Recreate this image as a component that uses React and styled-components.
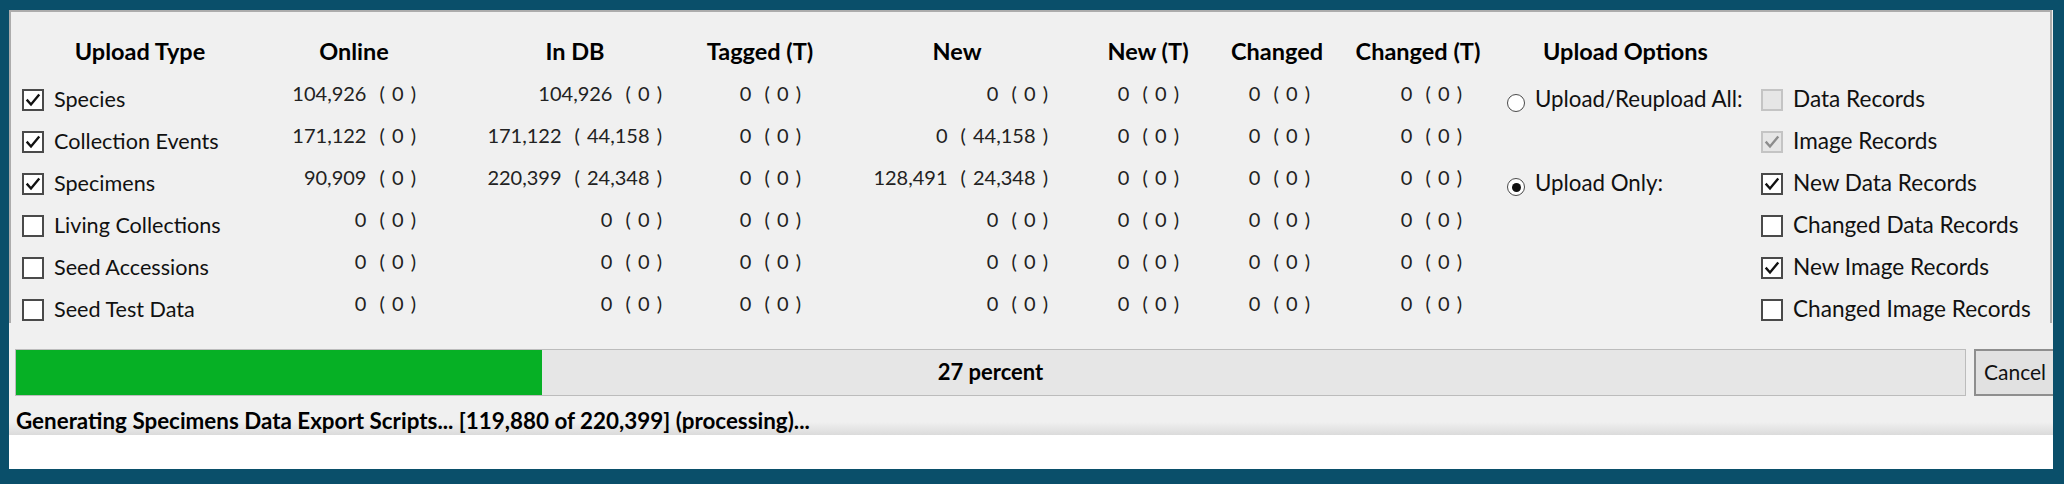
import React from "react";
import styled, { createGlobalStyle } from "styled-components";

const GlobalStyle = createGlobalStyle`
  html, body { margin: 0; padding: 0; }
  body { background: #0a4f6a; font-family: "Lato", "Open Sans", sans-serif; }
`;

const Frame = styled.div`
  width: 2064px;
  height: 484px;
  box-sizing: border-box;
  padding: 10px 11px 15px 9px;
  background: #0a4f6a;
`;

const Window = styled.div`
  height: 459px;
  background: #f0f0f0;
  display: flex;
  flex-direction: column;
  overflow: hidden;
`;

const GroupPanel = styled.div`
  flex: none;
  height: 313px;
  box-sizing: border-box;
  margin-right: 1px;
  border: 2px solid #acacac;
  border-bottom: none;
  overflow: hidden;
`;

const Table = styled.div`
  display: grid;
  grid-template-columns: 258px 170px 272px 98px 296px 86px 172px 110px 278px 299px;
  grid-template-rows: 67px repeat(6, 42px);
`;

const HeaderCell = styled.div`
  display: flex;
  justify-content: ${(p) => (p.$left ? "flex-start" : "center")};
  padding-top: 25px;
  padding-left: ${(p) => p.$pl || 0}px;
  font-size: 23.5px;
  line-height: 28px;
  font-weight: 700;
  color: #000;
  white-space: nowrap;
`;

const NameCell = styled.div`
  display: flex;
  align-items: center;
  gap: 10px;
  padding-left: ${(p) => p.$pl || 0}px;
  white-space: nowrap;
`;

const Label = styled.span`
  font-size: ${(p) => p.$size || 22}px;
  line-height: 26px;
  padding-bottom: 3px;
  color: #111;
`;

const NumCell = styled.div`
  display: flex;
  justify-content: flex-end;
  align-items: flex-start;
  padding-top: 2px;
  padding-right: ${(p) => p.$pr}px;
  font-size: 20px;
  line-height: 24px;
  color: #222;
  white-space: pre;
`;

const Paren = styled.span`
  margin-left: 13px;
  word-spacing: 2px;
`;

const Box = styled.span`
  flex: none;
  width: 22px;
  height: 22px;
  box-sizing: border-box;
  border: 2px solid ${(p) => (p.$disabled ? "#c4c4c4" : "#4a4a4a")};
  background: ${(p) => (p.$disabled ? "#e6e6e6" : "#fff")};
  display: flex;
  align-items: center;
  justify-content: center;
`;

const RadioCircle = styled.span`
  flex: none;
  width: 18px;
  height: 18px;
  margin-top: 6px;
  box-sizing: border-box;
  border-radius: 50%;
  border: 1.5px solid #4a4a4a;
  background: #fff;
  display: flex;
  align-items: center;
  justify-content: center;
`;

const RadioDot = styled.span`
  width: 9px;
  height: 9px;
  border-radius: 50%;
  background: #111;
`;

const Empty = styled.div``;

const ProgressRow = styled.div`
  flex: none;
  display: flex;
  gap: 8px;
  margin-top: 26px;
  height: 47px;
  padding-left: 6px;
`;

const ProgressBar = styled.div`
  flex: none;
  width: 1951px;
  box-sizing: border-box;
  border: 1px solid #bcbcbc;
  background: #e6e6e6;
  display: grid;
`;

const ProgressFill = styled.div`
  grid-area: 1 / 1;
  justify-self: start;
  height: 100%;
  background: #06b025;
`;

const ProgressText = styled.div`
  grid-area: 1 / 1;
  align-self: center;
  justify-self: center;
  font-size: 22px;
  font-weight: 700;
  color: #000;
  padding-bottom: 2px;
`;

const CancelButton = styled.button`
  flex: none;
  width: 92px;
  height: 47px;
  box-sizing: border-box;
  border: 2px solid #8e8e8e;
  background: #e1e1e1;
  font-family: "Lato", "Open Sans", sans-serif;
  font-size: 21px;
  color: #111;
  text-align: left;
  padding: 0 0 2px 8px;
`;

const StatusBar = styled.div`
  flex: none;
  height: 39px;
  box-sizing: border-box;
  padding: 12px 0 0 7px;
  font-size: 22.4px;
  line-height: 26px;
  font-weight: 700;
  color: #000;
  white-space: nowrap;
  background: linear-gradient(to bottom, #f0f0f0 26px, #dbdbdb 39px);
`;

const WhiteArea = styled.div`
  flex: 1;
  background: #fff;
`;

const Check = ({ color }) => (
  <svg width="16" height="16" viewBox="0 0 16 16">
    <polyline
      points="2.5,8.5 6,12.5 13.5,3.5"
      fill="none"
      stroke={color}
      strokeWidth="2.4"
      strokeLinecap="square"
      strokeLinejoin="miter"
    />
  </svg>
);

const CheckBox = ({ checked, disabled }) => (
  <Box $disabled={disabled}>
    {checked && <Check color={disabled ? "#8c8c8c" : "#111"} />}
  </Box>
);

const Radio = ({ checked }) => (
  <RadioCircle>{checked && <RadioDot />}</RadioCircle>
);

const headers = [
  "Online",
  "In DB",
  "Tagged (T)",
  "New",
  "New (T)",
  "Changed",
  "Changed (T)",
];
const rightPad = [23, 49, 8, 57, 12, 53, 11];

const z = ["0", "0"];
const rows = [
  {
    label: "Species",
    checked: true,
    cells: [["104,926", "0"], ["104,926", "0"], z, z, z, z, z],
    radio: { label: "Upload/Reupload All:", checked: false },
    option: { label: "Data Records", checked: false, disabled: true },
  },
  {
    label: "Collection Events",
    checked: true,
    cells: [["171,122", "0"], ["171,122", "44,158"], z, ["0", "44,158"], z, z, z],
    option: { label: "Image Records", checked: true, disabled: true },
  },
  {
    label: "Specimens",
    checked: true,
    cells: [["90,909", "0"], ["220,399", "24,348"], z, ["128,491", "24,348"], z, z, z],
    radio: { label: "Upload Only:", checked: true },
    option: { label: "New Data Records", checked: true },
  },
  {
    label: "Living Collections",
    checked: false,
    cells: [z, z, z, z, z, z, z],
    option: { label: "Changed Data Records", checked: false },
  },
  {
    label: "Seed Accessions",
    checked: false,
    cells: [z, z, z, z, z, z, z],
    option: { label: "New Image Records", checked: true },
  },
  {
    label: "Seed Test Data",
    checked: false,
    cells: [z, z, z, z, z, z, z],
    option: { label: "Changed Image Records", checked: false },
  },
];

const percent = 27;

export default function App() {
  return (
    <>
      <GlobalStyle />
      <Frame>
        <Window>
          <GroupPanel>
            <Table>
              <HeaderCell>Upload Type</HeaderCell>
              {headers.map((h) => (
                <HeaderCell key={h}>{h}</HeaderCell>
              ))}
              <HeaderCell $left $pl={70}>Upload Options</HeaderCell>
              <Empty />
              {rows.map((r) => (
                <React.Fragment key={r.label}>
                  <NameCell $pl={11}>
                    <CheckBox checked={r.checked} />
                    <Label $size={21.6}>{r.label}</Label>
                  </NameCell>
                  {r.cells.map(([n, p], i) => (
                    <NumCell key={i} $pr={rightPad[i]}>
                      <span>{n}</span>
                      <Paren>{`( ${p} )`}</Paren>
                    </NumCell>
                  ))}
                  {r.radio ? (
                    <NameCell $pl={34}>
                      <Radio checked={r.radio.checked} />
                      <Label $size={22.3}>{r.radio.label}</Label>
                    </NameCell>
                  ) : (
                    <Empty />
                  )}
                  <NameCell $pl={10}>
                    <CheckBox checked={r.option.checked} disabled={r.option.disabled} />
                    <Label $size={22.6}>{r.option.label}</Label>
                  </NameCell>
                </React.Fragment>
              ))}
            </Table>
          </GroupPanel>
          <ProgressRow>
            <ProgressBar>
              <ProgressFill style={{ width: `${percent}%` }} />
              <ProgressText>{percent} percent</ProgressText>
            </ProgressBar>
            <CancelButton>Cancel</CancelButton>
          </ProgressRow>
          <StatusBar>
            Generating Specimens Data Export Scripts... [119,880 of 220,399] (processing)...
          </StatusBar>
          <WhiteArea />
        </Window>
      </Frame>
    </>
  );
}
